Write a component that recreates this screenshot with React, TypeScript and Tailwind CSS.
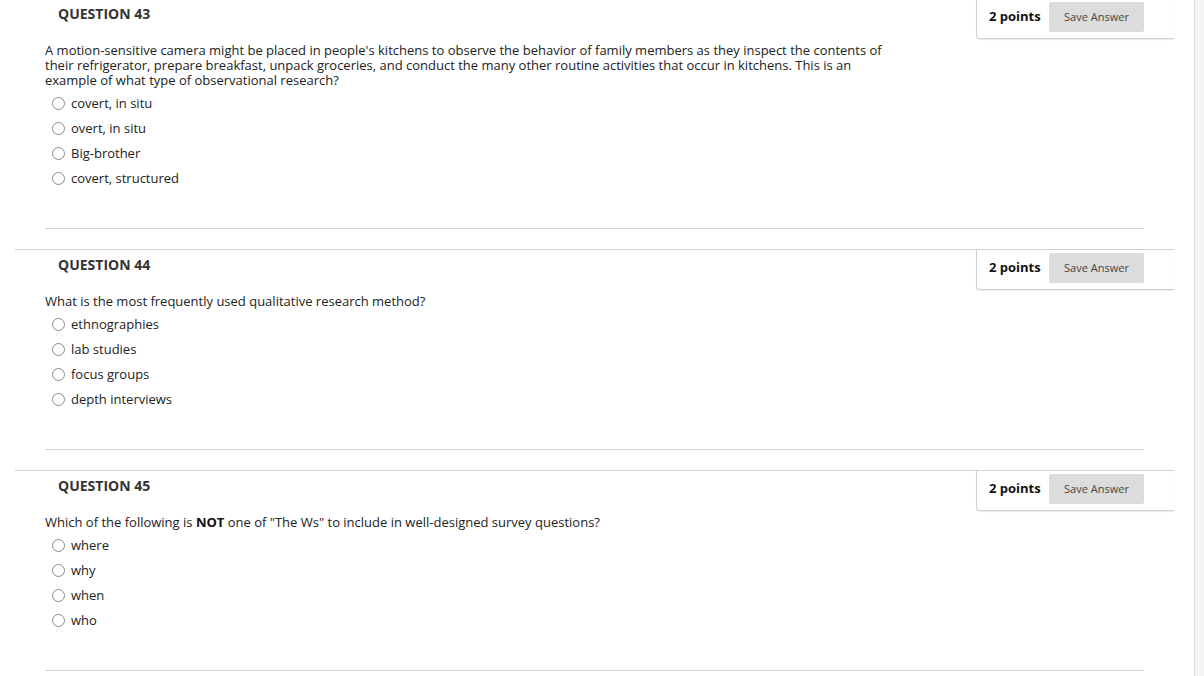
import React from "react";

type Q = {
  num: number;
  text: React.ReactNode;
  options: string[];
};

const questions: Q[] = [
  {
    num: 43,
    text: (
      <>
        A motion-sensitive camera might be placed in people's kitchens to observe the behavior of family members as they inspect the contents of
        <br />
        their refrigerator, prepare breakfast, unpack groceries, and conduct the many other routine activities that occur in kitchens. This is an
        <br />
        example of what type of observational research?
      </>
    ),
    options: ["covert, in situ", "overt, in situ", "Big-brother", "covert, structured"],
  },
  {
    num: 44,
    text: <>What is the most frequently used qualitative research method?</>,
    options: ["ethnographies", "lab studies", "focus groups", "depth interviews"],
  },
  {
    num: 45,
    text: (
      <>
        Which of the following is <b className="font-bold text-[#111]">NOT</b> one of "The Ws" to include in well-designed survey questions?
      </>
    ),
    options: ["where", "why", "when", "who"],
  },
];

function Radio() {
  return (
    <span className="inline-block w-[13px] h-[13px] rounded-full border border-[#8a8a8a] bg-white shrink-0" />
  );
}

function Question({ q }: { q: Q }) {
  return (
    <div className="ml-[15px] w-[1159px] border-t border-[#d2d2d2] mb-[20px]">
      <div className="flex justify-between items-start h-[40px]">
        <div className="pl-[43px] pt-[5px] text-[14px] leading-[19px] font-bold text-[#333]">
          QUESTION {q.num}
        </div>
        <div className="w-[198px] h-[40px] border-l border-b border-[#cfcfcf] rounded-bl-[4px] shadow-[0_1px_1px_rgba(0,0,0,0.08)] flex items-start pl-[12px] pr-[30px] pt-[3px]">
          <span className="text-[13px] font-bold text-[#111] leading-[19px] mt-[5px]">2 points</span>
          <button className="ml-auto w-[95px] h-[30px] bg-[#dcdcdc] rounded-[2px] text-[11px] text-[#444] leading-[30px] text-center">
            Save Answer
          </button>
        </div>
      </div>
      <div className="pl-[30px] pr-[30px]">
        <div className="mt-[4px] text-[13px] leading-[15px] text-[#222]">{q.text}</div>
        <div className="mt-[3px] flex flex-col">
          {q.options.map((o) => (
            <div key={o} className="h-[25px] flex items-center pl-[7px] gap-[6px] text-[13px] text-[#222]">
              <Radio />
              <span className="leading-[15px]">{o}</span>
            </div>
          ))}
        </div>
        <div className="mt-[37px] border-t border-[#d2d2d2]" />
      </div>
    </div>
  );
}

export default function App() {
  return (
    <div
      className="w-[1204px] h-[676px] overflow-hidden bg-white flex"
      style={{ fontFamily: '"Open Sans", "Noto Sans", sans-serif' }}
    >
      <div className="w-[1194px] shrink-0">
        <div className="-mt-[2px]">
          {questions.map((q) => (
            <Question key={q.num} q={q} />
          ))}
        </div>
      </div>
      <div className="w-[10px] shrink-0 border-l border-[#dcdcdc] bg-[#f5f5f5]" />
    </div>
  );
}
